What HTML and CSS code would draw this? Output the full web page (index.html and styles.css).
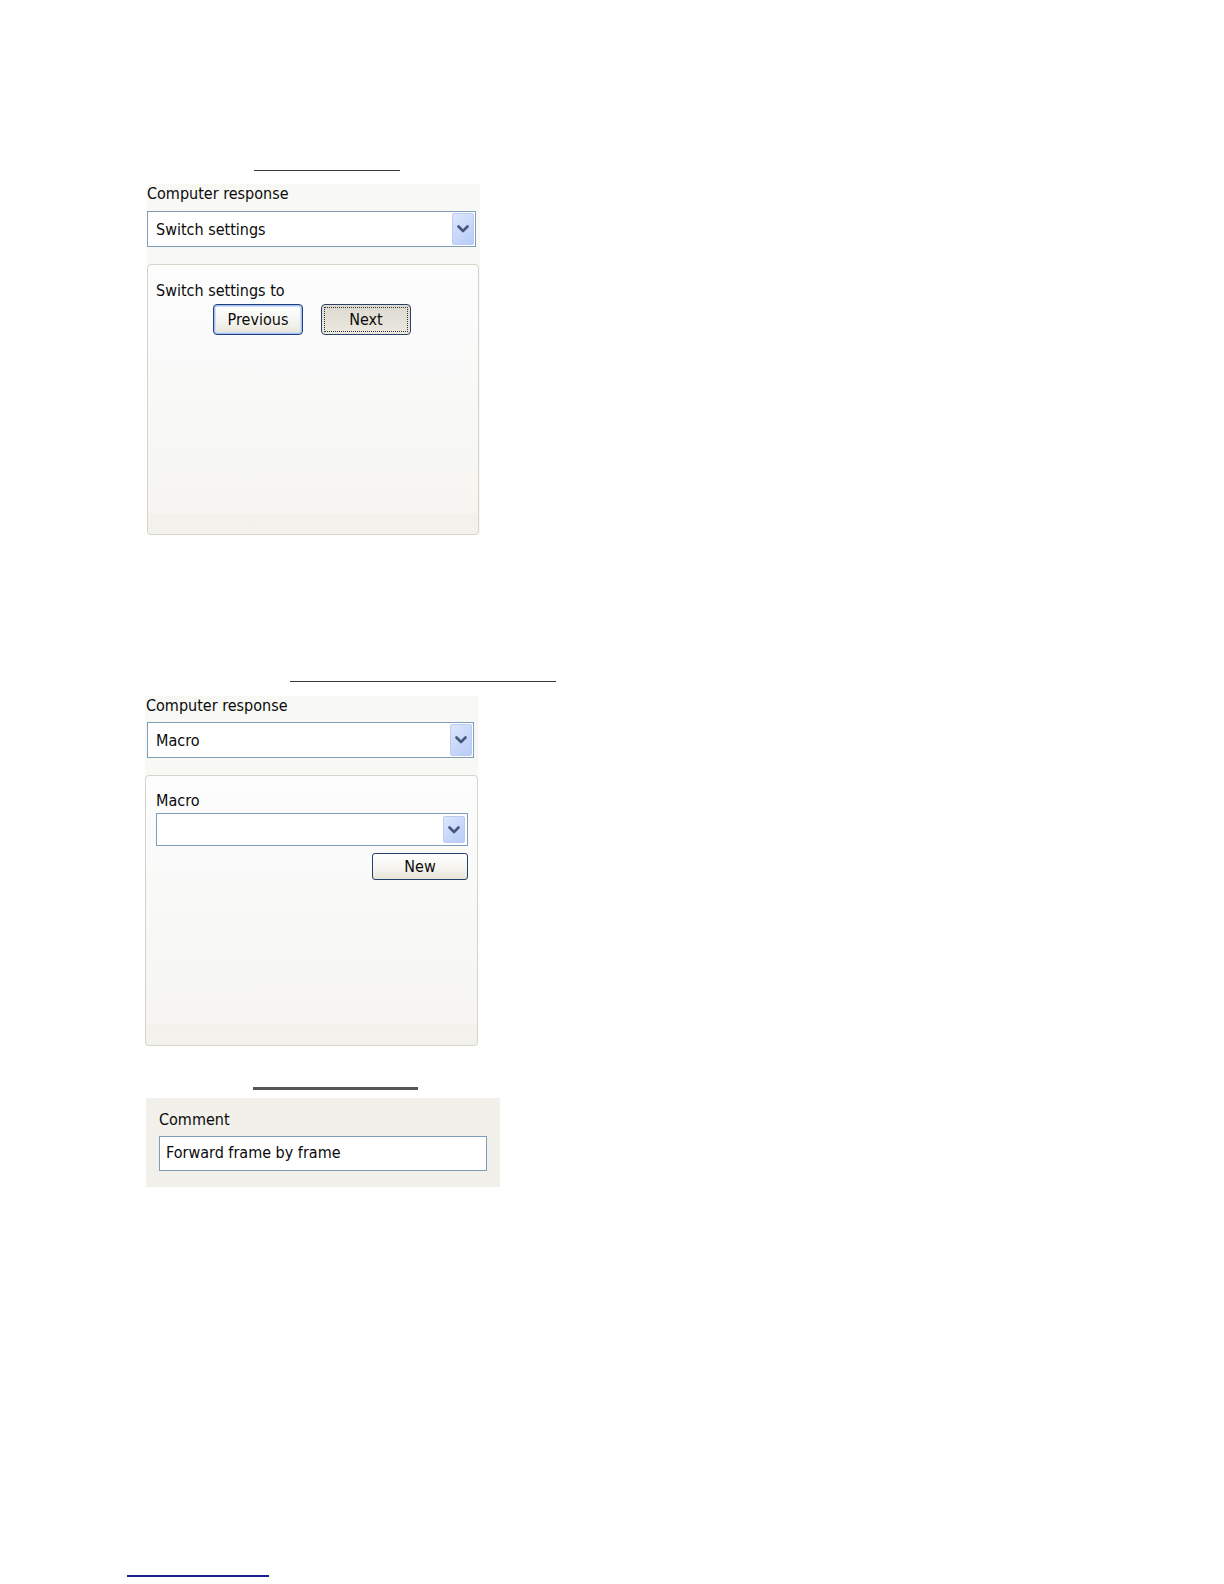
FILE: index.html
```html
<!DOCTYPE html>
<html>
<head>
<meta charset="utf-8">
<link rel="stylesheet" href="styles.css">
</head>
<body>
<div class="page">
  <div class="rule rule-a"></div>
  <div class="shot shot-a">
    <div class="label">Computer response</div>
    <div class="combo">
      <span class="combo-text">Switch settings</span>
      <span class="drop"><svg width="12" height="8" viewBox="0 0 12 8"><path d="M1.5 1.5 L6 6 L10.5 1.5" fill="none" stroke="#44577c" stroke-width="2.6" stroke-linecap="round" stroke-linejoin="round"/></svg></span>
    </div>
    <div class="group group-a">
      <div class="label">Switch settings to</div>
      <div class="btn-row">
        <button class="btn btn-default">Previous</button>
        <button class="btn btn-pressed"><span class="focus">Next</span></button>
      </div>
    </div>
  </div>

  <div class="rule rule-b"></div>
  <div class="shot shot-b">
    <div class="label">Computer response</div>
    <div class="combo">
      <span class="combo-text">Macro</span>
      <span class="drop"><svg width="12" height="8" viewBox="0 0 12 8"><path d="M1.5 1.5 L6 6 L10.5 1.5" fill="none" stroke="#44577c" stroke-width="2.6" stroke-linecap="round" stroke-linejoin="round"/></svg></span>
    </div>
    <div class="group group-b">
      <div class="label">Macro</div>
      <div class="combo combo-small">
        <span class="combo-text"></span>
        <span class="drop"><svg width="12" height="8" viewBox="0 0 12 8"><path d="M1.5 1.5 L6 6 L10.5 1.5" fill="none" stroke="#44577c" stroke-width="2.6" stroke-linecap="round" stroke-linejoin="round"/></svg></span>
      </div>
      <div class="new-row"><button class="btn btn-new">New</button></div>
    </div>
  </div>

  <div class="rule rule-c"></div>
  <div class="shot shot-c">
    <div class="label">Comment</div>
    <div class="textbox">Forward frame by frame</div>
  </div>

  <div class="rule rule-d"></div>
</div>
</body>
</html>
```
FILE: styles.css
```css
html, body {
  margin: 0;
  padding: 0;
  background: #ffffff;
}
.page {
  width: 1224px;
  height: 1584px;
  overflow: hidden;
  font-family: "DejaVu Sans Condensed", "DejaVu Sans", "Liberation Sans", sans-serif;
  font-size: 16px;
  color: #0a0a0a;
}
.page::before {
  content: "";
  display: table;
}
.rule {
  background: #3a3a3a;
  height: 1px;
}
.rule-a { margin: 170px 0 0 254px; width: 146px; }
.rule-b { margin: 146px 0 0 290px; width: 266px; }
.rule-c { margin: 41px 0 0 253px; width: 165px; height: 3px; background: #565656; }
.rule-d { margin: 388px 0 0 127px; width: 142px; height: 2px; background: #1c1c8c; }

.shot {
  background: #f8f8f5;
  box-sizing: border-box;
}
.shot-a { margin: 13px 0 0 147px; width: 333px; }
.shot-b { margin: 14px 0 0 145px; width: 333px; }
.shot-c { margin: 8px 0 0 146px; width: 354px; height: 89px; padding: 12px 13px 0 13px; background: #f1f0eb; }

.label {
  height: 20px;
  line-height: 20px;
}
.shot-b > .label { padding-left: 1px; }

.combo {
  display: flex;
  align-items: center;
  height: 36px;
  box-sizing: border-box;
  border: 1px solid #7f9db9;
  background: #fff;
  margin: 7px 4px 17px 0;
  padding: 1px 1px 1px 8px;
}
.shot-b > .combo { margin: 6px 4px 17px 2px; }
.combo-text { flex: 1; }
.drop {
  width: 22px;
  height: 32px;
  box-sizing: border-box;
  border: 1px solid #bccbf0;
  border-radius: 2px;
  background: linear-gradient(135deg, #dde6fc 0%, #c8d7fb 55%, #b9ccf6 100%);
  display: flex;
  align-items: center;
  justify-content: center;
}
.combo-small {
  height: 33px;
  margin: 2px 0 7px 0;
  padding: 2px 2px 2px 8px;
}
.combo-small .drop { height: 27px; width: 22px; }

.group {
  box-sizing: border-box;
  border: 1px solid #d5d4c8;
  border-radius: 4px;
  background: linear-gradient(180deg, #fdfdfe 0%, #f9f9f8 45%, #f6f5f1 92%, #f2f1ec 92.5%, #f3f2ed 100%);
  height: 271px;
}
.group-a { margin-right: 1px; padding: 16px 8px 0 8px; }
.group-b { padding: 15px 9px 0 10px; }

.btn-row {
  display: flex;
  gap: 18px;
  margin: 3px 0 0 57px;
}
.btn {
  font-family: inherit;
  font-size: 16px;
  color: #0a0a0a;
  height: 31px;
  box-sizing: border-box;
  border: 1px solid #1f3f7a;
  border-radius: 4px;
  background: linear-gradient(180deg, #ffffff 0%, #f4f3ee 60%, #e6e4d8 100%);
  padding: 0;
  margin: 0;
}
.btn-default {
  width: 90px;
  box-shadow: inset 0 0 0 1px #a9c2f5, inset 0 0 0 2px #cfdcfa;
}
.btn-pressed {
  width: 90px;
  background: linear-gradient(180deg, #dcdad0 0%, #e4e2d8 50%, #ebe9e0 100%);
  border-color: #2c3f66;
  padding: 2px;
}
.btn-pressed .focus {
  display: flex;
  align-items: center;
  justify-content: center;
  height: 100%;
  border: 1px dotted #333;
  box-sizing: border-box;
}
.new-row {
  display: flex;
  justify-content: flex-end;
}
.btn-new {
  width: 96px;
  height: 27px;
  border-color: #25406e;
  border-radius: 3px;
}

.textbox {
  margin-top: 6px;
  height: 35px;
  box-sizing: border-box;
  border: 1px solid #7f9db9;
  background: #fff;
  line-height: 31px;
  padding-left: 6px;
}
```
